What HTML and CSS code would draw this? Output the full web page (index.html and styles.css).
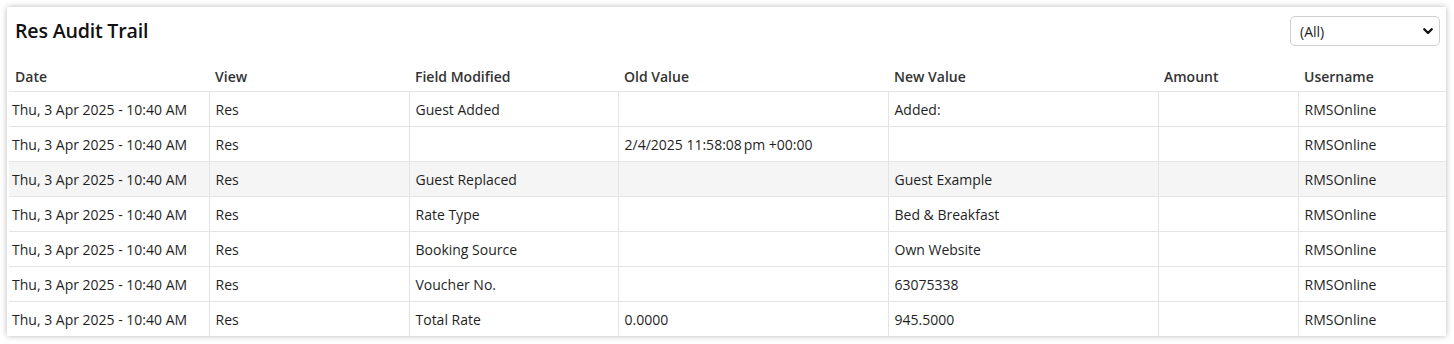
FILE: index.html
```html
<!DOCTYPE html>
<html>
<head>
<meta charset="utf-8">
<link rel="stylesheet" href="styles.css">
</head>
<body>
<div class="card">
  <div class="card-head">
    <h1 class="title">Res Audit Trail</h1>
    <div class="select-wrap">
      <select class="filter"><option>(All)</option></select>
      <svg class="chev" width="10" height="7" viewBox="0 0 10 7"><path d="M1.3 1.3 L5 5 L8.7 1.3" fill="none" stroke="#111" stroke-width="2.3" stroke-linecap="round" stroke-linejoin="round"/></svg>
    </div>
  </div>
  <table class="audit">
    <colgroup>
      <col class="c1"><col class="c2"><col class="c3"><col class="c4"><col class="c5"><col class="c6"><col class="c7">
    </colgroup>
    <thead>
      <tr><th>Date</th><th>View</th><th>Field Modified</th><th>Old Value</th><th>New Value</th><th>Amount</th><th>Username</th></tr>
    </thead>
    <tbody>
      <tr><td>Thu, 3 Apr 2025 - 10:40 AM</td><td>Res</td><td>Guest Added</td><td></td><td>Added:</td><td></td><td>RMSOnline</td></tr>
      <tr><td>Thu, 3 Apr 2025 - 10:40 AM</td><td>Res</td><td></td><td>2/4/2025 11:58:08&#8239;pm +00:00</td><td></td><td></td><td>RMSOnline</td></tr>
      <tr class="hl"><td>Thu, 3 Apr 2025 - 10:40 AM</td><td>Res</td><td>Guest Replaced</td><td></td><td>Guest Example</td><td></td><td>RMSOnline</td></tr>
      <tr><td>Thu, 3 Apr 2025 - 10:40 AM</td><td>Res</td><td>Rate Type</td><td></td><td>Bed &amp; Breakfast</td><td></td><td>RMSOnline</td></tr>
      <tr><td>Thu, 3 Apr 2025 - 10:40 AM</td><td>Res</td><td>Booking Source</td><td></td><td>Own Website</td><td></td><td>RMSOnline</td></tr>
      <tr><td>Thu, 3 Apr 2025 - 10:40 AM</td><td>Res</td><td>Voucher No.</td><td></td><td>63075338</td><td></td><td>RMSOnline</td></tr>
      <tr><td>Thu, 3 Apr 2025 - 10:40 AM</td><td>Res</td><td>Total Rate</td><td>0.0000</td><td>945.5000</td><td></td><td>RMSOnline</td></tr>
    </tbody>
  </table>
</div>
</body>
</html>
```

FILE: styles.css
```css
html, body {
  margin: 0;
  background: #ffffff;
}
body {
  padding: 7px 8px 8px 7px;
  font-family: "Open Sans", "Noto Sans", sans-serif;
  color: #1f1f1f;
}
.card {
  background: #fff;
  box-shadow: 0 0 6px rgba(0, 0, 0, 0.28);
  width: 1439px;
  overflow: hidden;
}
.card-head {
  display: flex;
  justify-content: space-between;
  align-items: flex-start;
  padding: 9px 6px 16px 8px;
}
.title {
  margin: 1px 0 0;
  font-size: 19.6px;
  line-height: 28px;
  font-weight: 600;
  color: #111;
  letter-spacing: -0.2px;
}
.select-wrap {
  position: relative;
  width: 150px;
  height: 30px;
}
.filter {
  appearance: none;
  -webkit-appearance: none;
  width: 150px;
  height: 30px;
  box-sizing: border-box;
  border: 1px solid #cfcfcf;
  border-radius: 5px;
  background: #fff;
  padding: 0 0 0 9px;
  font-family: "Open Sans", sans-serif;
  font-size: 14px;
  color: #222;
}
.chev {
  position: absolute;
  right: 7px;
  top: 12px;
}
.audit {
  margin-left: 2px;
  border-collapse: collapse;
  table-layout: fixed;
  width: 1437px;
  font-size: 14px;
  line-height: 20px;
}
.c1 { width: 200px; }
.c2 { width: 200px; }
.c3 { width: 209px; }
.c4 { width: 270px; }
.c5 { width: 270px; }
.c6 { width: 140px; }
.c7 { width: 148px; }
.audit th {
  text-align: left;
  font-weight: 600;
  color: #333;
  padding: 5px 6px 4px;
  border-bottom: 1px solid #e4e4e4;
}
.audit td {
  padding: 8px 6px 6px;
  border-bottom: 1px solid #e4e4e4;
  border-left: 1px solid #e4e4e4;
  color: #1f1f1f;
  white-space: nowrap;
}
.audit td:first-child {
  border-left: none;
  padding-left: 3px;
}
.audit tbody tr:last-child td {
  border-bottom: none;
}
.audit tr.hl td {
  background: #f5f5f5;
}
```
